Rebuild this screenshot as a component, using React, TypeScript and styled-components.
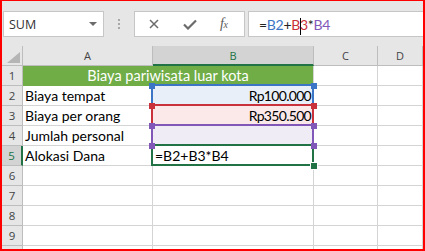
import React from "react";
import styled, { createGlobalStyle } from "styled-components";

const CELL_FONT = `"Lato", "Liberation Sans", sans-serif`;
const UI_FONT = `"Open Sans", "Liberation Sans", sans-serif`;

const GREEN = "#217346";
const BLUE = "#3c74c6";
const RED = "#c9313b";
const PURPLE = "#8157b8";
const GRID = "#d4d4d4";
const HEAD_LINE = "#bdbdbd";

const GlobalStyle = createGlobalStyle`
  html, body {
    margin: 0;
    padding: 0;
    background: #fff;
  }
  * {
    box-sizing: border-box;
  }
`;

const Frame = styled.div`
  width: 425px;
  height: 251px;
  overflow: hidden;
  display: flex;
  flex-direction: column;
  background: #fff;
  border: 2px solid #ff0000;
  border-top-width: 1px;
`;

const FormulaBar = styled.div`
  flex: none;
  height: 45px;
  display: flex;
  align-items: flex-start;
  padding: 10px 0 0 1px;
  background: #e6e6e6;
`;

const NameBox = styled.div`
  width: 101px;
  height: 26px;
  display: flex;
  align-items: center;
  justify-content: space-between;
  padding: 0 6px 0 5px;
  background: #fff;
  border: 1px solid #c6c6c6;
  font-family: ${UI_FONT};
  font-size: 12.5px;
  color: #333;
`;

const DropArrow = styled.span`
  width: 0;
  height: 0;
  border-left: 4px solid transparent;
  border-right: 4px solid transparent;
  border-top: 4px solid #6b6b6b;
`;

const Grip = styled.div`
  width: 30px;
  height: 26px;
  display: flex;
  flex-direction: column;
  align-items: center;
  justify-content: center;
  gap: 2px;
`;

const GripDot = styled.span`
  width: 2px;
  height: 2px;
  background: #a8a8a8;
`;

const IconBox = styled.div`
  width: 111px;
  height: 26px;
  display: flex;
  align-items: center;
  padding-left: 14px;
  gap: 24px;
  background: #fff;
  border: 1px solid #c6c6c6;
`;

const FxLabel = styled.span`
  margin-left: -1px;
  font-family: "Liberation Serif", serif;
  font-style: italic;
  font-size: 14px;
  color: #5a5a5a;
  letter-spacing: -0.5px;

  small {
    font-size: 10px;
  }
`;

const FormulaInput = styled.div`
  flex: 1;
  height: 26px;
  margin-left: 3px;
  display: flex;
  align-items: center;
  padding-left: 10px;
  background: #fff;
  border: 1px solid #c6c6c6;
  border-right: none;
  font-family: ${CELL_FONT};
  font-size: 14px;
  color: #222;
  letter-spacing: -0.3px;
  white-space: pre;
`;

const Ref = styled.span<{ $color: string }>`
  color: ${(p) => p.$color};
`;

const Caret = styled.span`
  display: inline-block;
  width: 1px;
  height: 17px;
  margin: 0 -1px -4px 0;
  background: #000;
  vertical-align: baseline;
`;

const Sheet = styled.div`
  display: grid;
  grid-template-columns: 21px 130px 161px 64px 1fr;
  grid-auto-rows: 20px;
`;

const Corner = styled.div`
  display: flex;
  justify-content: flex-end;
  align-items: flex-end;
  padding: 0 2px 2px 0;
  background: #e6e6e6;
  border-right: 1px solid ${HEAD_LINE};
  border-bottom: 1px solid ${HEAD_LINE};
`;

const CornerMark = styled.span`
  width: 13px;
  height: 11px;
  background: #b5b5b5;
  clip-path: polygon(100% 0, 100% 100%, 0 100%);
`;

const ColHeader = styled.div<{ $active?: boolean }>`
  display: flex;
  align-items: center;
  justify-content: center;
  background: ${(p) => (p.$active ? "#d3d3d3" : "#e6e6e6")};
  border-right: 1px solid ${HEAD_LINE};
  border-bottom: ${(p) => (p.$active ? `2px solid ${GREEN}` : `1px solid ${HEAD_LINE}`)};
  font-family: ${UI_FONT};
  font-size: 11px;
  color: ${(p) => (p.$active ? GREEN : "#444")};
`;

const RowHeader = styled.div<{ $active?: boolean }>`
  display: flex;
  align-items: center;
  justify-content: center;
  background: ${(p) => (p.$active ? "#d3d3d3" : "#e6e6e6")};
  border-right: ${(p) => (p.$active ? `2px solid ${GREEN}` : `1px solid ${HEAD_LINE}`)};
  border-bottom: 1px solid ${HEAD_LINE};
  font-family: ${UI_FONT};
  font-size: 11.5px;
  color: ${(p) => (p.$active ? GREEN : "#444")};
`;

const Cell = styled.div<{ $align?: "left" | "right" | "center"; $bg?: string; $span?: number }>`
  position: relative;
  display: flex;
  align-items: flex-end;
  justify-content: ${(p) =>
    p.$align === "right" ? "flex-end" : p.$align === "center" ? "center" : "flex-start"};
  grid-column: ${(p) => (p.$span ? `span ${p.$span}` : "auto")};
  padding: 0 2px 1px;
  background: ${(p) => p.$bg || "#fff"};
  border-right: 1px solid ${GRID};
  border-bottom: 1px solid ${GRID};
  font-family: ${CELL_FONT};
  font-size: 14px;
  line-height: 17px;
  color: #000;
  white-space: nowrap;
`;

const TitleCell = styled(Cell)`
  background: #70ad47;
  border-bottom-color: #70ad47;
  color: #fff;
  font-size: 14.5px;
`;

const MoneyCell = styled(Cell)`
  letter-spacing: -0.7px;
  padding-right: 2px;
`;

const RangeFrame = styled.span<{ $color: string }>`
  position: absolute;
  top: -2px;
  left: -2px;
  right: -1px;
  bottom: -1px;
  border: 2px solid ${(p) => p.$color};
  z-index: 1;
  pointer-events: none;
`;

const Handle = styled.span<{ $color: string; $v: "top" | "bottom"; $h: "left" | "right" }>`
  position: absolute;
  ${(p) => p.$v}: ${(p) => (p.$v === "top" ? "-3px" : "-4px")};
  ${(p) => p.$h}: -4px;
  width: 6px;
  height: 6px;
  background: ${(p) => p.$color};
  z-index: 2;
`;

const FillHandle = styled.span`
  position: absolute;
  right: -4px;
  bottom: -4px;
  width: 6px;
  height: 6px;
  background: ${GREEN};
  box-shadow: 0 0 0 1px #fff;
  z-index: 2;
`;

const RefRange: React.FC<{ color: string }> = ({ color }) => (
  <>
    <RangeFrame $color={color} />
    <Handle $color={color} $v="top" $h="left" />
    <Handle $color={color} $v="top" $h="right" />
    <Handle $color={color} $v="bottom" $h="left" />
    <Handle $color={color} $v="bottom" $h="right" />
  </>
);

const XIcon = () => (
  <svg width="10" height="10" viewBox="0 0 10 10">
    <path d="M1 1 L9 9 M9 1 L1 9" stroke="#6b6b6b" strokeWidth="1.5" fill="none" />
  </svg>
);

const CheckIcon = () => (
  <svg width="14" height="11" viewBox="0 0 14 11">
    <path d="M1 5.5 L5 9.5 L13 1.5" stroke="#6b6b6b" strokeWidth="2.2" fill="none" />
  </svg>
);

type RowData = {
  label: string;
  value?: string;
  ref: string;
  bg: string;
};

const rows: RowData[] = [
  { label: "Biaya tempat", value: "Rp100.000", ref: BLUE, bg: "#e9eff8" },
  { label: "Biaya per orang", value: "Rp350.500", ref: RED, bg: "#fbe9ea" },
  { label: "Jumlah personal", ref: PURPLE, bg: "#f0ecf6" },
];

// row 10 only peeks in under the bottom edge, its number is hidden
const emptyRows = ["6", "7", "8", "9", ""];

export default function App() {
  return (
    <>
      <GlobalStyle />
      <Frame>
        <FormulaBar>
          <NameBox>
            SUM
            <DropArrow />
          </NameBox>
          <Grip>
            <GripDot />
            <GripDot />
            <GripDot />
          </Grip>
          <IconBox>
            <XIcon />
            <CheckIcon />
            <FxLabel>
              f<small>x</small>
            </FxLabel>
          </IconBox>
          <FormulaInput>
            =<Ref $color={BLUE}>B2</Ref>+<Ref $color={RED}>B</Ref><Caret /><Ref $color={RED}>3</Ref>*<Ref $color={PURPLE}>B4</Ref>
          </FormulaInput>
        </FormulaBar>

        <Sheet>
          <Corner>
            <CornerMark />
          </Corner>
          <ColHeader>A</ColHeader>
          <ColHeader $active>B</ColHeader>
          <ColHeader>C</ColHeader>
          <ColHeader>D</ColHeader>

          <RowHeader>1</RowHeader>
          <TitleCell $span={2} $align="center">
            Biaya pariwisata luar kota
          </TitleCell>
          <Cell />
          <Cell />

          {rows.map((r, i) => (
            <React.Fragment key={r.label}>
              <RowHeader>{i + 2}</RowHeader>
              <Cell>{r.label}</Cell>
              <MoneyCell $align="right" $bg={r.bg}>
                {r.value}
                <RefRange color={r.ref} />
              </MoneyCell>
              <Cell />
              <Cell />
            </React.Fragment>
          ))}

          <RowHeader $active>5</RowHeader>
          <Cell>Alokasi Dana</Cell>
          <Cell>
            =B2+B3*B4
            <RangeFrame $color={GREEN} />
            <FillHandle />
          </Cell>
          <Cell />
          <Cell />

          {emptyRows.map((n, i) => (
            <React.Fragment key={i}>
              <RowHeader>{n}</RowHeader>
              <Cell />
              <Cell />
              <Cell />
              <Cell />
            </React.Fragment>
          ))}
        </Sheet>
      </Frame>
    </>
  );
}
